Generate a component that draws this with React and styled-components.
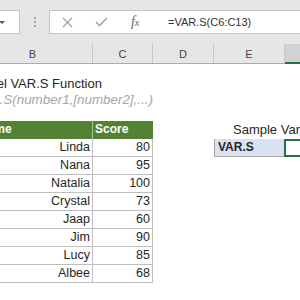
import React from "react";
import styled, { createGlobalStyle } from "styled-components";

const GlobalStyle = createGlobalStyle`
  html, body {
    margin: 0;
    padding: 0;
    background: #ffffff;
    overflow: hidden;
  }
  body {
    font-family: "Liberation Sans", Arial, sans-serif;
    color: #222;
  }
`;

const COLS = "120px 60px 61px 71px 1fr";

const Screen = styled.div`
  width: 300px;
  height: 300px;
  overflow: hidden;
  display: flex;
  flex-direction: column;
`;

const Toolbar = styled.div`
  height: 44px;
  flex-shrink: 0;
  background: #e6e6e6;
  display: flex;
  align-items: center;
`;

const NameBox = styled.div`
  width: 20px;
  height: 24px;
  box-sizing: border-box;
  background: #fff;
  border: 1px solid #c6c6c6;
  border-left: none;
  display: flex;
  align-items: center;
`;

const Arrow = styled.span`
  width: 0;
  height: 0;
  border-left: 3px solid transparent;
  border-right: 3px solid transparent;
  border-top: 3px solid #555;
  margin-left: -1px;
`;

const Dots = styled.div`
  width: 29px;
  display: flex;
  flex-direction: column;
  align-items: center;
  gap: 2px;
`;

const Dot = styled.span`
  width: 2px;
  height: 2px;
  background: #a8a8a8;
`;

const FormulaBox = styled.div`
  flex: 1;
  height: 24px;
  box-sizing: border-box;
  background: #fff;
  border: 1px solid #c6c6c6;
  border-right: none;
  display: flex;
  align-items: center;
`;

const IconSlot = styled.div`
  width: 34px;
  height: 22px;
  display: flex;
  align-items: center;
  justify-content: center;
  color: #a6a6a6;
`;

const Fx = styled.span`
  font-family: "Liberation Serif", "Times New Roman", serif;
  font-style: italic;
  font-size: 14px;
  color: #666;
  letter-spacing: -0.5px;
  & > small {
    font-size: 11px;
  }
`;

const FormulaText = styled.div`
  padding-left: 16px;
  font-size: 11px;
  color: #333;
  white-space: nowrap;
`;

const Grid = styled.div`
  display: grid;
  grid-template-columns: ${COLS};
  margin-left: -27px;
`;

const ColHeader = styled(Grid)`
  height: 20px;
  flex-shrink: 0;
  background: #e6e6e6;
  border-bottom: 1px solid #ababab;
  box-sizing: border-box;
`;

const ColLabel = styled.div`
  display: flex;
  align-items: center;
  justify-content: center;
  font-size: 11px;
  color: #444;
  border-right: ${p => (p.$last ? "none" : "1px solid #c8c8c8")};
  background: ${p => (p.$selected ? "#d2d2d2" : "transparent")};
  box-shadow: ${p => (p.$selected ? "inset 0 -2px 0 #217346" : "none")};
  margin-bottom: ${p => (p.$selected ? "-1px" : "0")};
`;

const Sheet = styled(Grid)`
  grid-auto-rows: 18px;
  padding-top: 3px;
  flex: 1;
`;

const Cell = styled.div`
  box-sizing: border-box;
  font-size: 12.5px;
  line-height: 17px;
  white-space: nowrap;
  padding: 0 2px;
  text-align: ${p => p.$align || "left"};
  overflow: ${p => (p.$spill ? "visible" : "hidden")};
  grid-column: ${p => p.$col || "auto"};
  color: #262626;
`;

const Title = styled(Cell)`
  font-size: 13px;
  padding-top: 8px;
`;

const Subtitle = styled(Cell)`
  font-style: italic;
  font-size: 13.4px;
  color: #a6a6a6;
  padding-top: 6px;
  text-indent: -10px;
`;

const HeadCell = styled(Cell)`
  background: #548235;
  color: #fff;
  font-weight: bold;
  font-size: 12px;
  padding-left: ${p => p.$indent || 2}px;
  border-right: 1px solid ${p => (p.$end ? "#548235" : "#a9c08f")};
`;

const DataCell = styled(Cell)`
  border-bottom: 1px solid #bfbfbf;
  border-right: 1px solid #bfbfbf;
`;

const CaptionCell = styled(Cell)`
  font-size: 13px;
  padding-left: 19px;
`;

const LabelCell = styled(Cell)`
  background: #d9e1f2;
  font-weight: bold;
  font-size: 12px;
  border-left: 1px solid #a6a6a6;
  border-bottom: 1px solid #a6a6a6;
  padding-left: 3px;
`;

const ActiveCell = styled(Cell)`
  border: 2px solid #217346;
  border-right: none;
  margin-left: -1px;
`;

const scores = [
  ["Linda", 80],
  ["Nana", 95],
  ["Natalia", 100],
  ["Crystal", 73],
  ["Jaap", 60],
  ["Jim", 90],
  ["Lucy", 85],
  ["Albee", 68],
];

function XIcon() {
  return (
    <svg width="11" height="11" viewBox="0 0 11 11">
      <path d="M1 1 L10 10 M10 1 L1 10" stroke="currentColor" strokeWidth="1.4" fill="none" />
    </svg>
  );
}

function CheckIcon() {
  return (
    <svg width="13" height="10" viewBox="0 0 13 10">
      <path d="M1 5 L4.5 8.5 L12 1" stroke="currentColor" strokeWidth="1.6" fill="none" />
    </svg>
  );
}

export default function App() {
  return (
    <>
      <GlobalStyle />
      <Screen>
        <Toolbar>
          <NameBox>
            <Arrow />
          </NameBox>
          <Dots>
            <Dot />
            <Dot />
            <Dot />
          </Dots>
          <FormulaBox>
            <IconSlot>
              <XIcon />
            </IconSlot>
            <IconSlot>
              <CheckIcon />
            </IconSlot>
            <IconSlot>
              <Fx>
                f<small>x</small>
              </Fx>
            </IconSlot>
            <FormulaText>=VAR.S(C6:C13)</FormulaText>
          </FormulaBox>
        </Toolbar>

        <ColHeader>
          <ColLabel>B</ColLabel>
          <ColLabel>C</ColLabel>
          <ColLabel>D</ColLabel>
          <ColLabel>E</ColLabel>
          <ColLabel $last $selected />
        </ColHeader>

        <Sheet>
          <Title $spill $col="1 / -1">Excel VAR.S Function</Title>
          <Subtitle $spill $col="1 / -1">=VAR.S(number1,[number2],...)</Subtitle>
          <Cell $col="1 / -1" />

          <HeadCell $indent={6}>Name</HeadCell>
          <HeadCell $end>Score</HeadCell>
          <Cell />
          <CaptionCell $spill>Sample Variance</CaptionCell>
          <Cell />

          {scores.map(([name, score], i) => (
            <React.Fragment key={name}>
              <DataCell $align="right">{name}</DataCell>
              <DataCell $align="right">{score}</DataCell>
              <Cell />
              {i === 0 ? (
                <>
                  <LabelCell>VAR.S</LabelCell>
                  <ActiveCell />
                </>
              ) : (
                <>
                  <Cell />
                  <Cell />
                </>
              )}
            </React.Fragment>
          ))}
        </Sheet>
      </Screen>
    </>
  );
}
